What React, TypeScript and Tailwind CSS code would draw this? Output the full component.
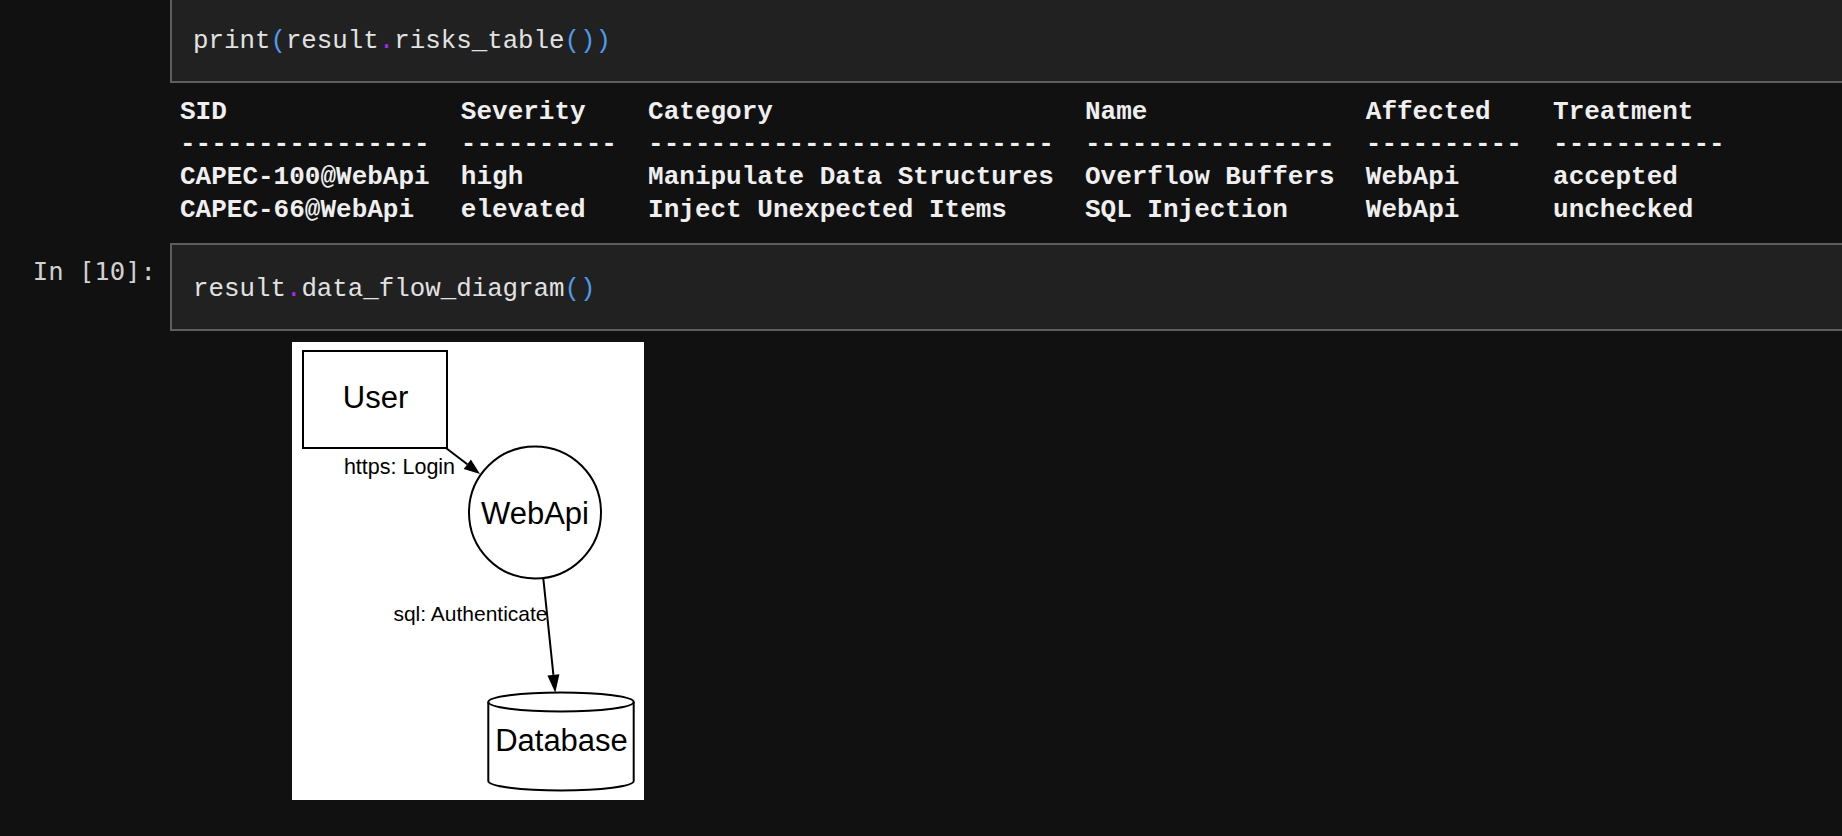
const Code = ({ children }: { children: React.ReactNode }) => (
  <div className="flex-1 h-[88px] flex items-center pl-[21px] pt-[7px] bg-[#212121] border-2 border-r-0 border-[#5e5e5e] font-['Liberation_Mono',monospace] text-[25.8px] text-[#e2e2e2]">
    <span className="whitespace-pre">{children}</span>
  </div>
);

const P = ({ children }: { children: React.ReactNode }) => (
  <span className="text-[#4f9bea]">{children}</span>
);
const Dot = () => <span className="text-[#a32cf0]">.</span>;

const rows = [
  "SID               Severity    Category                    Name              Affected    Treatment",
  "----------------  ----------  --------------------------  ----------------  ----------  -----------",
  "CAPEC-100@WebApi  high        Manipulate Data Structures  Overflow Buffers  WebApi      accepted",
  "CAPEC-66@WebApi   elevated    Inject Unexpected Items     SQL Injection     WebApi      unchecked",
];

const Diagram = () => (
  <svg width="352" height="458" viewBox="0 0 352 458" className="block">
    <rect x="0" y="0" width="352" height="458" fill="#fff" />
    <g stroke="#000" strokeWidth="2" fill="none">
      <rect x="11" y="9" width="144" height="97" />
      <circle cx="243" cy="170.5" r="66" />
      <line x1="154" y1="106" x2="175.3" y2="122.3" />
      <line x1="251.3" y1="236.3" x2="261.4" y2="332.8" />
      <ellipse cx="269" cy="360" rx="72.7" ry="9.5" fill="#fff" />
      <path d="M196.3 360 L196.3 439 A72.7 9.5 0 0 0 341.7 439 L341.7 360" />
    </g>
    <polygon points="188,132 171.7,127.1 178.9,117.5" fill="#000" />
    <polygon points="263.3,350.7 255.4,333.4 267.4,332.2" fill="#000" />
    <g fontFamily="'Liberation Sans', Arial, sans-serif" fill="#000" textAnchor="middle" dominantBaseline="central">
      <text x="83.5" y="55" fontSize="31">User</text>
      <text x="243" y="171" fontSize="31">WebApi</text>
      <text x="269.5" y="398" fontSize="31">Database</text>
      <text x="107.5" y="125" fontSize="21.5">https: Login</text>
      <text x="178.5" y="271" fontSize="21">sql: Authenticate</text>
    </g>
  </svg>
);

export default function App() {
  return (
    <div className="w-[1842px] h-[836px] overflow-hidden bg-[#111111]">
      <div className="flex mt-[-5px]">
        <div className="w-[170px] shrink-0" />
        <Code>
          print<P>(</P>result<Dot />risks_table<P>())</P>
        </Code>
      </div>

      <div className="pl-[180px] pt-[12.5px] font-['Liberation_Mono',monospace] font-bold text-[26px] leading-[32.7px] text-[#efefef] whitespace-pre">
        {rows.map((r) => (
          <div key={r}>{r}</div>
        ))}
      </div>

      <div className="flex mt-[17px]">
        <div className="w-[170px] shrink-0 pt-[12px] pr-[14px] text-right font-['DejaVu_Sans_Mono',monospace] text-[25.6px] leading-[32px] text-[#d0d0d0]">
          In [10]:
        </div>
        <Code>
          result<Dot />data_flow_diagram<P>()</P>
        </Code>
      </div>

      <div className="pl-[292px] pt-[11px]">
        <Diagram />
      </div>
    </div>
  );
}
